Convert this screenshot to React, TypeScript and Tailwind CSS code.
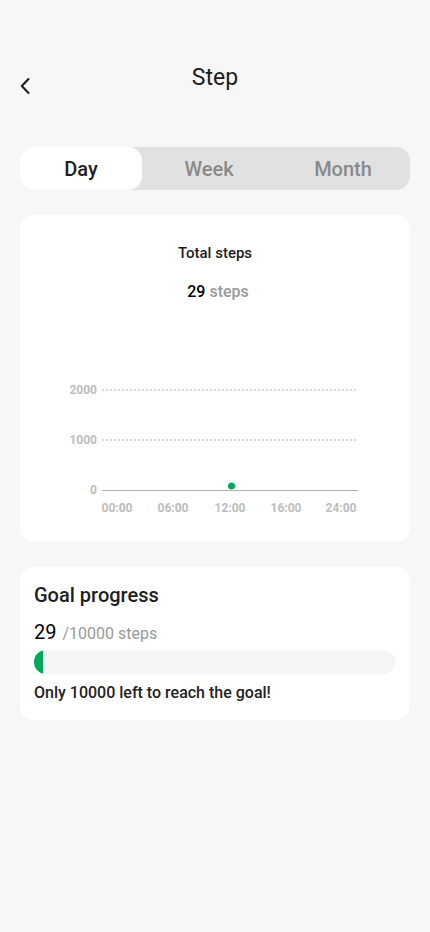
import React from 'react';

export default function App() {
  const tabs = ['Day', 'Week', 'Month'];
  const xLabels = [
    { t: '00:00', x: 97 },
    { t: '06:00', x: 153 },
    { t: '12:00', x: 210 },
    { t: '16:00', x: 266 },
    { t: '24:00', x: 321 },
  ];

  return (
    <div className="min-h-[932px] w-[430px] bg-[#f7f7f7] px-5 text-[#1c1c1c]" style={{ fontFamily: 'Roboto, "Noto Sans", sans-serif' }}>
      {/* Header */}
      <div className="relative h-[147px]">
        <button className="absolute left-0 top-[77px] h-[18px] w-[12px]">
          <svg width="12" height="18" viewBox="0 0 12 18" fill="none" stroke="#1c1c1c" strokeWidth="2" strokeLinecap="round" strokeLinejoin="round">
            <path d="M8.5 2 L1.8 9 L8.5 16" />
          </svg>
        </button>
        <h1 className="pt-[64px] text-center text-[23px] leading-[28px] font-normal">Step</h1>
      </div>

      {/* Segmented control */}
      <div className="flex h-[43px] rounded-[14px] bg-[#e1e1e1]">
        {tabs.map((t, i) => (
          <div
            key={t}
            className={
              i === 0
                ? 'flex w-[122px] items-center justify-center rounded-[14px] bg-white text-[20px] font-medium text-[#1e1e1e]'
                : 'flex flex-1 items-center justify-center text-[20px] font-medium text-[#8a8a8a]'
            }
          >
            {t}
          </div>
        ))}
      </div>

      {/* Total steps card */}
      <div className="mt-[25px] rounded-[14px] bg-white pt-[28px] pb-[12px]">
        <p className="text-center text-[15px] leading-[20px] font-medium text-[#1e1e1e]">Total steps</p>
        <p className="mt-[19px] pl-[6px] text-center text-[16px] leading-[20px] font-medium">
          <span className="text-black">29</span>&nbsp;<span className="text-[#9a9a9a]">steps</span>
        </p>
        <svg className="mt-[68px] block" width="390" height="160" viewBox="0 0 390 160">
          <g fontSize="12" fontWeight="700" fill="#bdbdbd" style={{ fontFamily: 'Roboto, sans-serif' }}>
            <text x="77" y="24" textAnchor="end">2000</text>
            <text x="77" y="74" textAnchor="end">1000</text>
            <text x="77" y="124" textAnchor="end">0</text>
            {xLabels.map((l) => (
              <text key={l.t} x={l.x} y="142" textAnchor="middle">{l.t}</text>
            ))}
          </g>
          <line x1="82" y1="20" x2="338" y2="20" stroke="#b5b5b5" strokeWidth="1" strokeDasharray="2 2" />
          <line x1="82" y1="70" x2="338" y2="70" stroke="#b5b5b5" strokeWidth="1" strokeDasharray="2 2" />
          <line x1="82" y1="120.5" x2="338" y2="120.5" stroke="#b0b0b0" strokeWidth="1" />
          <circle cx="211.5" cy="116" r="3.5" fill="#00a85a" />
        </svg>
      </div>

      {/* Goal progress card */}
      <div className="mt-[25px] rounded-[14px] bg-white px-[14px] pt-[16px] pb-[17px]">
        <p className="text-[20px] leading-[24px] font-medium text-[#1e1e1e]">Goal progress</p>
        <p className="mt-[12px] flex items-baseline gap-[6px] leading-[26px]">
          <span className="text-[20px] text-black">29</span>
          <span className="text-[16px] text-[#9a9a9a]">/10000 steps</span>
        </p>
        <div className="mt-[3px] h-[24px] w-[361px] overflow-hidden rounded-full bg-[#f5f5f5]">
          <div className="h-full w-[9px] rounded-l-full bg-[#00a85a]" />
        </div>
        <p className="mt-[9px] text-[16px] leading-[20px] font-medium text-[#222]">Only 10000 left to reach the goal!</p>
      </div>
    </div>
  );
}
